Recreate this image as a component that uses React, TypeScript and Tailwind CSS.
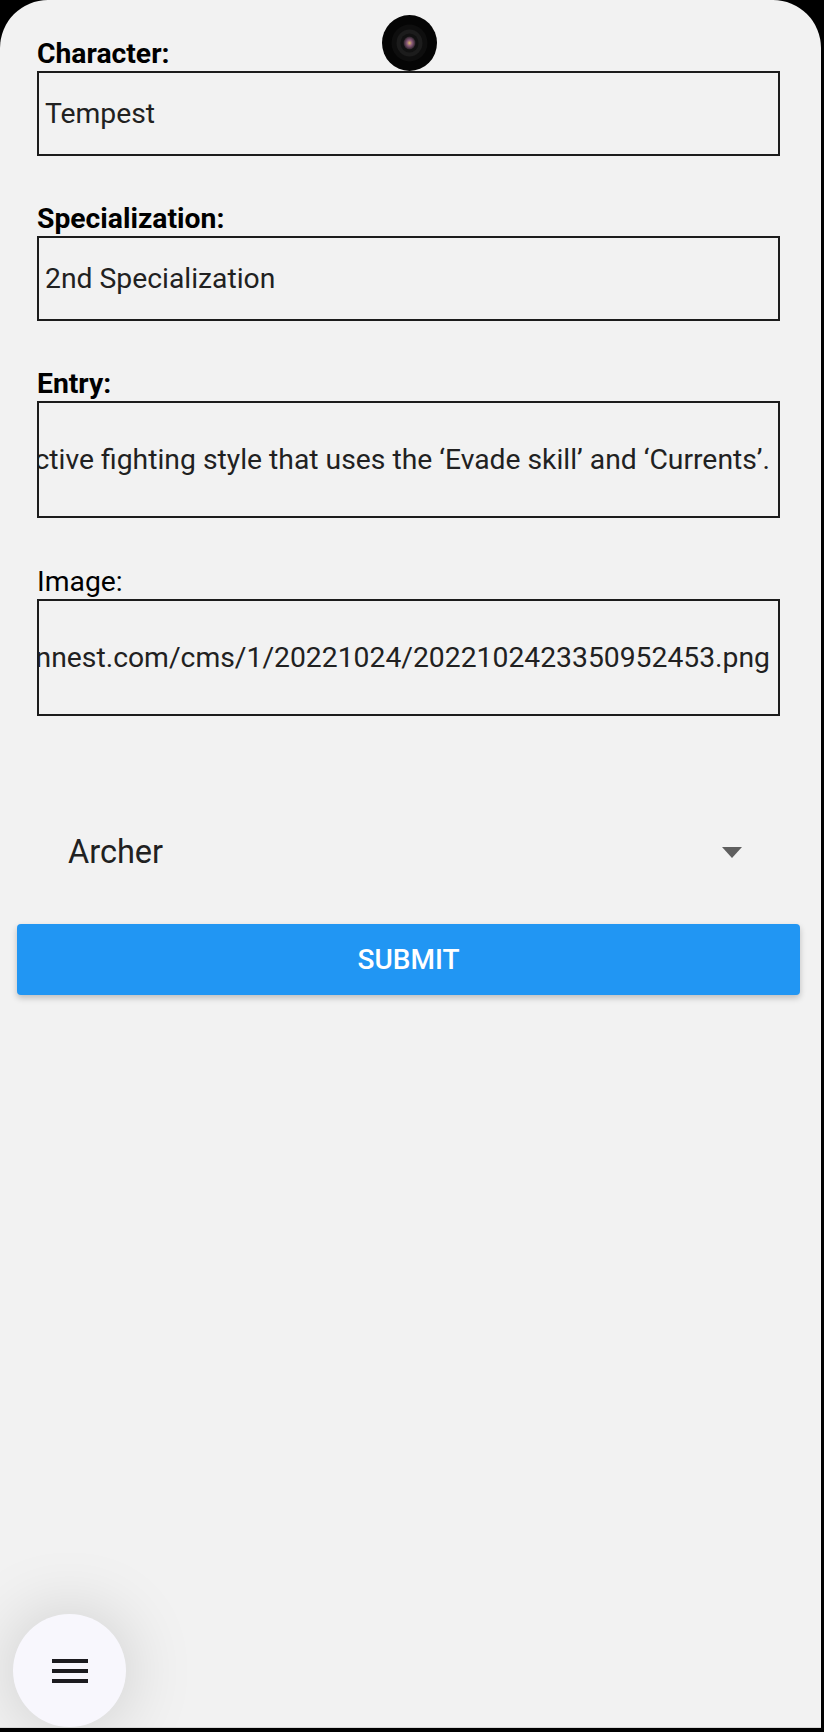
import React from "react";

function Field({
  label,
  value,
  bold = true,
  tall = false,
  scrolled = false,
  className = "",
}: {
  label: string;
  value: string;
  bold?: boolean;
  tall?: boolean;
  scrolled?: boolean;
  className?: string;
}) {
  return (
    <div className={className}>
      <div
        className={`text-[28.3px] leading-[33px] text-black ${bold ? "font-bold" : "font-normal"}`}
      >
        {label}
      </div>
      <div
        className={`mt-[1px] ${tall ? "h-[117px]" : "h-[85px]"} border-2 border-[#1c1c1c] flex items-center`}
      >
        <div
          className={`flex-1 min-w-0 overflow-hidden flex ${scrolled ? "justify-end pr-[8px]" : "justify-start pl-[6px]"}`}
        >
          <span className="whitespace-nowrap text-[28.3px] leading-[33px] text-[#212121]">
            {value}
          </span>
        </div>
      </div>
    </div>
  );
}

export default function App() {
  return (
    <div className="w-[824px] h-[1732px] bg-black font-['Roboto','Noto_Sans',sans-serif]">
      <div className="relative w-[821px] h-[1728px] bg-[#f2f2f2] rounded-t-[48px] overflow-hidden border-b border-[#d8d8d8]">
        <div className="pt-[37px] pl-[37px] pr-[41px]">
          <Field label="Character:" value="Tempest" />
          <Field className="mt-[46px]" label="Specialization:" value="2nd Specialization" />
          <Field
            className="mt-[46px]"
            label="Entry:"
            tall
            scrolled
            value="Tempest has an active fighting style that uses the ‘Evade skill’ and ‘Currents’."
          />
          <Field
            className="mt-[47px]"
            label="Image:"
            bold={false}
            tall
            scrolled
            value="https://ssl.nexon.com/s2/game/maplestory/renewal/common/nmsapp/bkg.mapleinnest.com/cms/1/20221024/2022102423350952453.png"
          />
        </div>

        <div className="pl-[17px] pr-[21px]">
          <div className="mt-[106px] h-[60px] flex items-center justify-between pl-[51px] pr-[58px]">
            <span className="text-[32.5px] leading-[38px] text-[#212121]">Archer</span>
            <svg width="20" height="11" viewBox="0 0 20 11">
              <path d="M0 0 L20 0 L10 11 Z" fill="#5f5f5f" />
            </svg>
          </div>
          <button className="mt-[42px] w-full h-[71px] bg-[#2196f3] rounded-[4px] shadow-[0_3px_6px_rgba(0,0,0,0.22)] flex items-center justify-center text-white text-[28px] font-medium leading-[33px]">
            SUBMIT
          </button>
        </div>

        {/* camera cutout */}
        <div className="absolute left-[382px] top-[15px] w-[55px] h-[56px]">
          <svg width="55" height="56" viewBox="0 0 55 56">
            <defs>
              <radialGradient id="lens" cx="50%" cy="50%" r="50%">
                <stop offset="0%" stopColor="#d9b96a" />
                <stop offset="45%" stopColor="#8a5a7a" />
                <stop offset="100%" stopColor="#2a2228" />
              </radialGradient>
            </defs>
            <ellipse cx="27.5" cy="28" rx="27.5" ry="28" fill="#050505" />
            <ellipse cx="27.5" cy="28" rx="18" ry="18.5" fill="#0e0e0e" />
            <ellipse cx="27.5" cy="28" rx="13" ry="13.5" fill="#1c1c1c" />
            <ellipse cx="27.5" cy="28" rx="9" ry="9.5" fill="#111" />
            <ellipse cx="27.5" cy="28" rx="6" ry="6.5" fill="url(#lens)" />
          </svg>
        </div>

        {/* floating menu button */}
        <div className="absolute left-[13px] top-[1614px] w-[113px] h-[113px] rounded-full bg-[#f8f7fd] shadow-[0_0_70px_rgba(0,0,0,0.17)] flex flex-col items-center justify-center gap-[6px]">
          <div className="w-[36px] h-[4px] bg-[#1c1b1f]" />
          <div className="w-[36px] h-[4px] bg-[#1c1b1f]" />
          <div className="w-[36px] h-[4px] bg-[#1c1b1f]" />
        </div>
      </div>
    </div>
  );
}
